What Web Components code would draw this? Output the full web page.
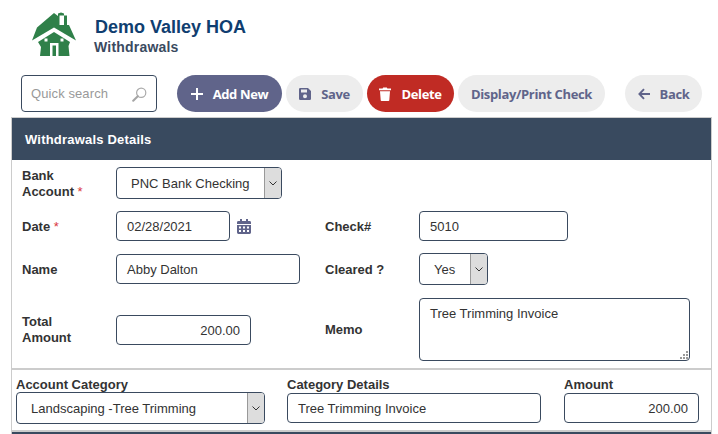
<!DOCTYPE html>
<html>
<head>
<meta charset="utf-8">
<title>Withdrawals</title>
<style>
  html, body { margin: 0; height: 434px; overflow: hidden; background: #fff; }
  body { font-family: "Liberation Sans", Arial, sans-serif; color: #333; }
</style>
</head>
<body>

<hoa-header title="Demo Valley HOA" subtitle="Withdrawals"></hoa-header>

<hoa-toolbar>
  <hoa-search placeholder="Quick search"></hoa-search>
  <hoa-button kind="primary" icon="plus" width="105">Add New</hoa-button>
  <hoa-button icon="save" width="77">Save</hoa-button>
  <hoa-button kind="danger" icon="trash" width="87">Delete</hoa-button>
  <hoa-button width="147">Display/Print Check</hoa-button>
  <hoa-button icon="back" width="77" style="margin-left:16px">Back</hoa-button>
</hoa-toolbar>

<hoa-panel heading="Withdrawals Details">
  <hoa-form>
    <hoa-label required>Bank<br>Account</hoa-label>
    <hoa-select width="166" pad="14" style="grid-column: 2 / 5">PNC Bank Checking</hoa-select>

    <hoa-label required>Date</hoa-label>
    <hoa-cell>
      <hoa-input width="114">02/28/2021</hoa-input>
      <hoa-calendar></hoa-calendar>
    </hoa-cell>
    <hoa-label>Check#</hoa-label>
    <hoa-input width="149">5010</hoa-input>

    <hoa-label>Name</hoa-label>
    <hoa-input width="184">Abby Dalton</hoa-input>
    <hoa-label>Cleared ?</hoa-label>
    <hoa-select width="69" pad="14">Yes</hoa-select>

    <hoa-label>Total<br>Amount</hoa-label>
    <hoa-input width="135" align="right" style="margin-top:2px">200.00</hoa-input>
    <hoa-label>Memo</hoa-label>
    <hoa-memo>Tree Trimming Invoice</hoa-memo>
  </hoa-form>

  <hoa-lines>
    <hoa-line-field label="Account Category">
      <hoa-select width="249" pad="14">Landscaping -Tree Trimming</hoa-select>
    </hoa-line-field>
    <hoa-line-field label="Category Details">
      <hoa-input width="254">Tree Trimming Invoice</hoa-input>
    </hoa-line-field>
    <hoa-line-field label="Amount" style="margin-left:1px">
      <hoa-input width="135" align="right">200.00</hoa-input>
    </hoa-line-field>
  </hoa-lines>
</hoa-panel>

<script>
// icons used by the toolbar buttons
const icons = {
  plus: '<svg width="12" height="12" viewBox="0 0 12 12"><path d="M6 0v12M0 6h12" stroke="currentColor" stroke-width="2"/></svg>',
  save: '<svg width="12" height="12" viewBox="0 0 12 12"><path fill="currentColor" fill-rule="evenodd" d="M1.2 0H9l3 3v7.8A1.2 1.2 0 0 1 10.8 12H1.2A1.2 1.2 0 0 1 0 10.8V1.2A1.2 1.2 0 0 1 1.2 0zM2 1.6V4.4h6V1.6zM6 6.2a2 2 0 1 0 0 4 2 2 0 0 0 0-4z"/></svg>',
  trash: '<svg width="12" height="14" viewBox="0 0 12 14"><path fill="currentColor" d="M0 1.6h3.6L4.2.4h3.6l.6 1.2H12v1.6H0zM1 4.2h10l-.7 9a.9.9 0 0 1-.9.8H2.6a.9.9 0 0 1-.9-.8z"/></svg>',
  back: '<svg width="12" height="12" viewBox="0 0 12 12"><path d="M6 1.2 1.4 6 6 10.8M1.6 6H12" fill="none" stroke="currentColor" stroke-width="1.9"/></svg>'
};

class HoaHeader extends HTMLElement {
  constructor() {
    super();
    this.attachShadow({mode: 'open'});
    this.shadowRoot.innerHTML = `
      <style>
        :host { display: flex; height: 75px; box-sizing: border-box; padding: 12px 0 0 32px; gap: 18px; }
        svg { display: block; flex: none; }
        .text { padding-top: 4px; }
        h1 { margin: 0; font: bold 18px/22px "Liberation Sans", Arial, sans-serif; color: #0f3e70; }
        h2 { margin: 1px 0 0 -1px; font: bold 14px/17px "Liberation Sans", Arial, sans-serif; letter-spacing: .2px; color: #3a4a5f; }
      </style>
      <svg width="45" height="46" viewBox="32 12 45 46">
        <path fill="#2f8049" d="M54 13 58 16V13.5L61 12.5 64 13.5 64 15.5 67 15.5 67 25 69 25 76 40.5 54 27.5 32 40.5 37 27.5z"/>
        <path fill="#2f8049" d="M54 32 70 42 68.5 46 69.5 56H40L41 47 38 42z"/>
        <path fill="#fff" d="M59.5 15.5h4.5V25h-4.5z"/>
        <path fill="#fff" d="M50 43h8.5v13H56V45.5h-3.5V56H50zM44.5 38.5h3v3h-3zM60.5 38.5h3v3h-3z"/>
      </svg>
      <div class="text">
        <h1>${this.getAttribute('title')}</h1>
        <h2>${this.getAttribute('subtitle')}</h2>
      </div>`;
  }
}
customElements.define('hoa-header', HoaHeader);

class HoaToolbar extends HTMLElement {
  constructor() {
    super();
    this.attachShadow({mode: 'open'});
    this.shadowRoot.innerHTML = `
      <style>
        :host { display: flex; gap: 4px; padding-left: 21px; height: 42px; box-sizing: border-box; align-items: flex-start; }
      </style>
      <slot></slot>`;
  }
}
customElements.define('hoa-toolbar', HoaToolbar);

class HoaSearch extends HTMLElement {
  constructor() {
    super();
    this.attachShadow({mode: 'open'});
    this.shadowRoot.innerHTML = `
      <style>
        :host { display: flex; align-items: center; justify-content: space-between; box-sizing: border-box;
          width: 136px; height: 37px; margin-right: 16px; padding: 0 9px 0 9px;
          border: 1px solid #3a4a5f; border-radius: 4px; background: #fff;
          font: 13px "Liberation Sans", Arial, sans-serif; letter-spacing: .1px; color: #999; }
        svg { display: block; margin-top: 2px; }
      </style>
      <span>${this.getAttribute('placeholder')}</span>
      <svg width="15" height="15" viewBox="0 0 15 15">
        <circle cx="9.2" cy="5.8" r="4.6" fill="#fff" stroke="#aaa" stroke-width="1.2"/>
        <path d="M5.8 9.2 1.2 13.8" stroke="#a5a5a5" stroke-width="2" stroke-linecap="round"/>
      </svg>`;
  }
}
customElements.define('hoa-search', HoaSearch);

class HoaButton extends HTMLElement {
  constructor() {
    super();
    this.attachShadow({mode: 'open'});
    const icon = icons[this.getAttribute('icon')] || '';
    this.shadowRoot.innerHTML = `
      <style>
        :host { display: flex; align-items: center; justify-content: center; gap: 10px; box-sizing: border-box;
          width: ${this.getAttribute('width')}px; height: 37px; border-radius: 19px;
          background: #ededed; color: #60648a;
          font: bold 13px "Open Sans", sans-serif; letter-spacing: -.35px; white-space: nowrap; }
        :host([kind="primary"]) { background: #60648a; color: #fff; }
        :host([kind="danger"]) { background: #c02b24; color: #fff; }
        svg { display: block; }
      </style>
      ${icon}<slot></slot>`;
  }
}
customElements.define('hoa-button', HoaButton);

class HoaPanel extends HTMLElement {
  constructor() {
    super();
    this.attachShadow({mode: 'open'});
    this.shadowRoot.innerHTML = `
      <style>
        :host { display: block; box-sizing: border-box; width: 701px; margin-left: 11px; height: 317px;
          border: solid #ccc; border-width: 1px 1px 0; }
        header { height: 42px; padding-left: 13px; background: #394a5f; color: #fff;
          font: bold 13px/44px "Liberation Sans", Arial, sans-serif; letter-spacing: .2px; }
        footer { height: 2px; background: #394a5f; }
      </style>
      <header>${this.getAttribute('heading')}</header>
      <slot></slot>
      <footer></footer>`;
  }
}
customElements.define('hoa-panel', HoaPanel);

class HoaForm extends HTMLElement {
  constructor() {
    super();
    this.attachShadow({mode: 'open'});
    this.shadowRoot.innerHTML = `
      <style>
        :host { display: grid; box-sizing: border-box; height: 210px; padding: 7px 0 0 10px;
          grid-template-columns: 94px 209px 94px 1fr;
          grid-template-rows: 32px 30px 32px 64px; row-gap: 12px; align-items: center;
          border-bottom: 2px solid #ccc; }
      </style>
      <slot></slot>`;
  }
}
customElements.define('hoa-form', HoaForm);

class HoaLabel extends HTMLElement {
  constructor() {
    super();
    this.attachShadow({mode: 'open'});
    this.shadowRoot.innerHTML = `
      <style>
        :host { display: block; padding-top: 2px; font: bold 13px/16px "Liberation Sans", Arial, sans-serif; color: #333; }
        .req { display: none; color: #d9363e; font-weight: normal; }
        :host([required]) .req { display: inline; }
      </style>
      <slot></slot><span class="req"> *</span>`;
  }
}
customElements.define('hoa-label', HoaLabel);

class HoaCell extends HTMLElement {
  constructor() {
    super();
    this.attachShadow({mode: 'open'});
    this.shadowRoot.innerHTML = `
      <style>:host { display: flex; align-items: center; gap: 7px; }</style>
      <slot></slot>`;
  }
}
customElements.define('hoa-cell', HoaCell);

class HoaCalendar extends HTMLElement {
  constructor() {
    super();
    this.attachShadow({mode: 'open'});
    this.shadowRoot.innerHTML = `
      <style>:host { display: block; height: 15px; } svg { display: block; }</style>
      <svg width="14" height="15" viewBox="0 0 14 15">
        <path fill="#60648a" fill-rule="evenodd" d="M3 0h2v2h4V0h2v2h1.600A1.400 1.400 0 0 1 14 3.400V5H0V3.400A1.400 1.400 0 0 1 1.400 2H3zM0 6h14v7.600a1.400 1.400 0 0 1-1.400 1.400H1.400A1.400 1.400 0 0 1 0 13.600zM2 7.500V9.500H4V7.500zM6 7.500V9.500H8V7.500zM10 7.500V9.500H12V7.500zM2 11V13H4V11zM6 11V13H8V11zM10 11V13H12V11z"/>
      </svg>`;
  }
}
customElements.define('hoa-calendar', HoaCalendar);

class HoaInput extends HTMLElement {
  constructor() {
    super();
    this.attachShadow({mode: 'open'});
    this.shadowRoot.innerHTML = `
      <style>
        :host { display: flex; align-items: center; box-sizing: border-box; height: 30px; padding: 0 10px;
          width: ${this.getAttribute('width')}px;
          border: 1px solid #3a4a5f; border-radius: 4px; background: #fff;
          font: 13px "Liberation Sans", Arial, sans-serif; color: #333; white-space: nowrap; }
        :host([align="right"]) { justify-content: flex-end; }
      </style>
      <slot></slot>`;
  }
}
customElements.define('hoa-input', HoaInput);

class HoaSelect extends HTMLElement {
  constructor() {
    super();
    this.attachShadow({mode: 'open'});
    this.shadowRoot.innerHTML = `
      <style>
        :host { display: flex; box-sizing: border-box; height: 32px;
          width: ${this.getAttribute('width')}px;
          border: 1px solid #3a4a5f; border-radius: 4px; background: #fff; overflow: hidden;
          font: 13px "Liberation Sans", Arial, sans-serif; color: #333; white-space: nowrap; }
        .value { flex: 1; display: flex; align-items: center; padding-left: ${this.getAttribute('pad')}px; }
        .arrow { flex: none; width: 16px; display: flex; align-items: center; justify-content: center;
          background: #ddd; border-left: 1px solid #999; }
        svg { display: block; }
      </style>
      <div class="value"><slot></slot></div>
      <div class="arrow">
        <svg width="8" height="5" viewBox="0 0 8 5"><path d="M.5.500 4 4 7.500.500" fill="none" stroke="#333" stroke-width="1"/></svg>
      </div>`;
  }
}
customElements.define('hoa-select', HoaSelect);

class HoaMemo extends HTMLElement {
  constructor() {
    super();
    this.attachShadow({mode: 'open'});
    this.shadowRoot.innerHTML = `
      <style>
        :host { display: block; position: relative; box-sizing: border-box; width: 271px; height: 63px; align-self: end;
          padding: 7px 10px; border: 1px solid #3a4a5f; border-radius: 4px; background: #fff;
          font: 13px/15px "Liberation Sans", Arial, sans-serif; color: #333; }
        svg { position: absolute; right: 1px; bottom: 1px; display: block; }
      </style>
      <slot></slot>
      <svg width="9" height="9" viewBox="0 0 9 9"><path fill="#999" d="M7 1h2v2H7zM4 4h2v2H4zM7 4h2v2H7zM1 7h2v2H1zM4 7h2v2H4zM7 7h2v2H7z"/></svg>`;
  }
}
customElements.define('hoa-memo', HoaMemo);

class HoaLines extends HTMLElement {
  constructor() {
    super();
    this.attachShadow({mode: 'open'});
    this.shadowRoot.innerHTML = `
      <style>
        :host { display: flex; box-sizing: border-box; height: 62px; padding: 7px 0 0 4px; gap: 22px;
          border-bottom: 2px solid #ccc; }
      </style>
      <slot></slot>`;
  }
}
customElements.define('hoa-lines', HoaLines);

class HoaLineField extends HTMLElement {
  constructor() {
    super();
    this.attachShadow({mode: 'open'});
    this.shadowRoot.innerHTML = `
      <style>
        :host { display: block; }
        .label { height: 15px; font: bold 13px/15px "Liberation Sans", Arial, sans-serif; color: #333; }
        .body { height: 32px; display: flex; align-items: center; }
      </style>
      <div class="label">${this.getAttribute('label')}</div>
      <div class="body"><slot></slot></div>`;
  }
}
customElements.define('hoa-line-field', HoaLineField);
</script>
</body>
</html>
